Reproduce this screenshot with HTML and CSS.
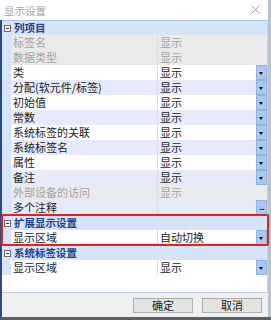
FILE: index.html
```html
<!DOCTYPE html>
<html>
<head>
    <title>显示设置</title>
    <link rel="stylesheet" href="styles.css">
</head>
<body>
    <div class="dialog">
        <div class="titlebar">
            <span class="title">显示设置</span>
            <svg class="close" width="9" height="9" viewBox="0 0 9 9"><path d="M0.5 0.5L8.5 8.5M8.5 0.5L0.5 8.5" stroke="#9a9a9a" stroke-width="1"/></svg>
        </div>
        <div class="body">
            <div class="grid">
                <div class="row group"><span class="toggle"></span><span class="group-name">列项目</span></div>
                <div class="row disabled"><span class="gutter"></span><span class="name">标签名</span><span class="value">显示</span></div>
                <div class="row disabled"><span class="gutter"></span><span class="name">数据类型</span><span class="value">显示</span></div>
                <div class="row"><span class="gutter"></span><span class="name">类</span><span class="value">显示</span><span class="drop"></span></div>
                <div class="row alt"><span class="gutter"></span><span class="name">分配(软元件/标签)</span><span class="value">显示</span><span class="drop"></span></div>
                <div class="row"><span class="gutter"></span><span class="name">初始值</span><span class="value">显示</span><span class="drop"></span></div>
                <div class="row alt"><span class="gutter"></span><span class="name">常数</span><span class="value">显示</span><span class="drop"></span></div>
                <div class="row"><span class="gutter"></span><span class="name">系统标签的关联</span><span class="value">显示</span><span class="drop"></span></div>
                <div class="row alt"><span class="gutter"></span><span class="name">系统标签名</span><span class="value">显示</span><span class="drop"></span></div>
                <div class="row"><span class="gutter"></span><span class="name">属性</span><span class="value">显示</span><span class="drop"></span></div>
                <div class="row alt"><span class="gutter"></span><span class="name">备注</span><span class="value">显示</span><span class="drop"></span></div>
                <div class="row disabled"><span class="gutter"></span><span class="name">外部设备的访问</span><span class="value">显示</span></div>
                <div class="row alt"><span class="gutter"></span><span class="name">多个注释</span><span class="value"></span><span class="dots">...</span></div>
                <div class="row group"><span class="toggle"></span><span class="group-name">扩展显示设置</span></div>
                <div class="row"><span class="gutter"></span><span class="name">显示区域</span><span class="value">自动切换</span><span class="drop"></span></div>
                <div class="row group"><span class="toggle"></span><span class="group-name">系统标签设置</span></div>
                <div class="row"><span class="gutter"></span><span class="name">显示区域</span><span class="value">显示</span><span class="drop"></span></div>
            </div>
            <div class="footer">
                <button type="button">确定</button>
                <button type="button">取消</button>
            </div>
        </div>
        <div class="highlight"></div>
    </div>
</body>
</html>
```

FILE: styles.css
```css
body {
    margin: 0;
    width: 271px;
    height: 320px;
    background-color: #59606c;
    font-family: "Noto Sans CJK SC", "Noto Sans", sans-serif;
    font-size: 11px;
    overflow: hidden;
}
.dialog {
    position: relative;
    width: 268px;
    height: 317px;
    background-color: #f0f0f0;
    display: flex;
    flex-direction: column;
    box-shadow: 3px 0 0 #b9c2cc;
}
.titlebar {
    height: 20px;
    background-color: white;
    display: flex;
    align-items: center;
    justify-content: space-between;
    padding: 0 8px 0 4px;
}
.title {
    color: #a4a4a4;
    font-size: 10.5px;
}
.close {
    margin-top: -1px;
}
.body {
    flex: 1;
    display: flex;
    flex-direction: column;
    border-left: 2px solid #2c4a7e;
}
.grid {
    height: 272px;
    background-color: white;
    border-right: 1px solid #c9d5e6;
}
.row {
    display: flex;
    height: 15px;
    line-height: 15px;
    background-color: white;
    color: #222;
    overflow: hidden;
}
.row.alt {
    background-color: #e6eafa;
}
.row.disabled {
    background-color: #eaeaea;
    color: #a2a2a2;
}
.gutter {
    width: 9px;
    background-color: #d5e4f8;
}
.name {
    width: 144px;
    padding-left: 2px;
    white-space: nowrap;
}
.value {
    flex: 1;
    padding-left: 2px;
    border-left: 1px solid #dcdfe8;
}
.drop,
.dots {
    width: 9px;
    height: 13px;
    background-color: #aac8f0;
    border: 1px solid #8fb2e2;
    position: relative;
}
.drop::after {
    content: "";
    position: absolute;
    left: 2px;
    top: 6px;
    border-left: 2.5px solid transparent;
    border-right: 2.5px solid transparent;
    border-top: 3px solid #111;
}
.dots {
    font-size: 9px;
    line-height: 12px;
    text-align: center;
    color: #111;
    letter-spacing: -1px;
}
.row.group {
    background-color: #d5e4f8;
    box-shadow: inset 0 1px 0 #a9c5ec;
    align-items: center;
}
.toggle {
    width: 5px;
    height: 5px;
    margin: 1px 3px 0 2px;
    border: 1px solid #6c6c6c;
    background-color: white;
    position: relative;
}
.toggle::after {
    content: "";
    position: absolute;
    left: 1px;
    top: 2px;
    width: 3px;
    height: 1px;
    background-color: #333;
}
.group-name {
    color: #1f3f8e;
    font-weight: bold;
    font-size: 10.5px;
    height: 14px;
    line-height: 14px;
    margin-top: 1px;
}
.footer {
    flex: 1;
    border-top: 1px solid #b9cde8;
    display: flex;
    justify-content: flex-end;
    align-items: flex-start;
    gap: 9px;
    padding: 5px 6px 0 0;
}
.footer button {
    width: 60px;
    height: 15px;
    padding: 0;
    font-family: inherit;
    font-size: 11px;
    line-height: 13px;
    color: #222;
    background-color: #e3e3e3;
    border: 1px solid #adadad;
}
.highlight {
    position: absolute;
    left: 1px;
    top: 214px;
    width: 264px;
    height: 28px;
    border: 2px solid #e4211b;
    border-radius: 2px;
}
```
